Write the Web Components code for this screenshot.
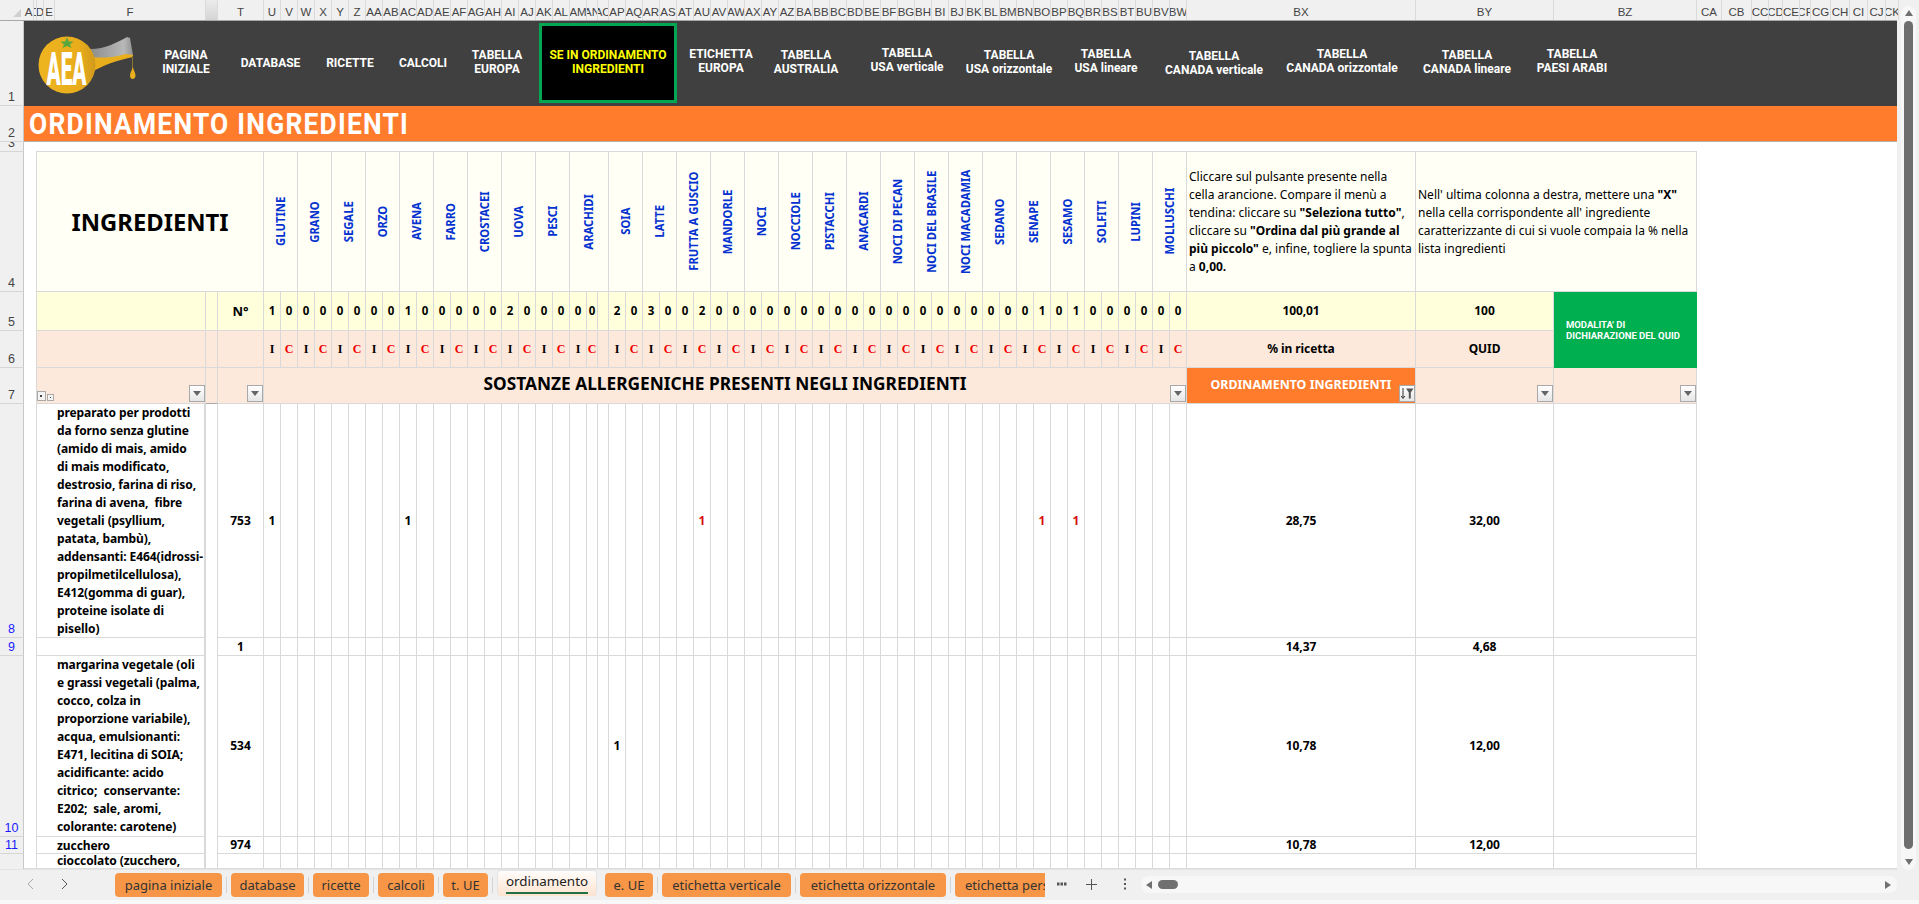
<!DOCTYPE html>
<html lang="it">
<head>
<meta charset="utf-8">
<title>ordinamento</title>
<style>
  html, body { margin: 0; height: 100%; overflow: hidden; background: #f0f0f0; }
</style>
</head>
<body>
<xl-app></xl-app>
<script>
const SUB_COLS = [];
for (let i = 0; i < 55; i++) SUB_COLS.push(i === 19 || i === 20 ? 11 : 17);
const TRACKS = [169, 12, 46, ...SUB_COLS, 229, 138, 143];

function colName(n) {
  let s = "";
  while (n > 0) {
    const m = (n - 1) % 26;
    s = String.fromCharCode(65 + m) + s;
    n = (n - m - 1) / 26;
  }
  return s;
}

class XlColBar extends HTMLElement {
  constructor() {
    super();
    this.attachShadow({ mode: "open" });
    const cols = [["A", 10], ["C", 3], ["D", 7], ["E", 11], ["F", 151], ["", 12, "gap"], ["T", 46]];
    SUB_COLS.forEach((w, i) => cols.push([colName(21 + i), w]));
    cols.push(["BX", 229], ["BY", 138], ["BZ", 143], ["CA", 25], ["CB", 30], ["CC", 17], ["CD", 14],
      ["CE", 17], ["CF", 11], ["CG", 20], ["CH", 19], ["CI", 18], ["CJ", 18], ["CK", 13]);
    this.shadowRoot.innerHTML = `
      <style>
        :host { display: flex; height: 20px; border-bottom: 1px solid #a8a8a8; background: #f0f0f0;
          font: 11.5px/20px "Liberation Sans", Arial, sans-serif; color: #444; }
        .corner { width: 24px; flex: none; position: relative; }
        .corner::after { content: ""; position: absolute; left: 13px; top: 9px; border-style: solid;
          border-width: 0 0 8px 8px; border-color: transparent transparent #d0d0d0 transparent; }
        .c { flex: none; box-sizing: border-box; text-align: center; overflow: hidden; white-space: nowrap;
          border-right: 1px solid #dadada; padding-top: 2px; display: flex; justify-content: center; }
        .gap { background: linear-gradient(#ececec, #d4d4d4); }
      </style>
      <div class="corner"></div>
      ${cols.map(([t, w, k]) => `<div class="c ${k || ""}" style="width:${w}px">${t}</div>`).join("")}`;
  }
}

class XlRowBar extends HTMLElement {
  constructor() {
    super();
    this.attachShadow({ mode: "open" });
    const rows = [[1, 85], [2, 36], [3, 10], [4, 140], [5, 39], [6, 37], [7, 36],
      [8, 234, 1], [9, 18, 1], [10, 181, 1], [11, 17, 1]];
    this.shadowRoot.innerHTML = `
      <style>
        :host { display: block; width: 24px; overflow: hidden; background: #f0f0f0;
          border-right: 0; font: 12.5px/16px "Liberation Sans", Arial, sans-serif; color: #444; box-sizing: border-box; }
        .r { box-sizing: border-box; border-bottom: 1px solid #d6d6d6; border-right: 1px solid #c8c8c8;
          display: flex; align-items: flex-end; justify-content: center; overflow: hidden; }
        .r span { display: block; }
        .f { color: #1a1aff; }
        .end { height: 20px; border-right: 1px solid #c8c8c8; }
      </style>
      ${rows.map(([n, h, f]) => `<div class="r ${f ? "f" : ""}" style="height:${h}px"><span>${n}</span></div>`).join("")}
      <div class="end"></div>`;
  }
}

class AeaLogo extends HTMLElement {
  constructor() {
    super();
    this.attachShadow({ mode: "open" });
    this.shadowRoot.innerHTML = `
      <style>:host { display: block; width: 132px; flex: none; } svg { display: block; margin: 9px 0 0 12px; }</style>
      <svg width="104" height="70" viewBox="36 30 104 70">
        <defs>
          <linearGradient id="gl" x1="0" x2="1" y1="0" y2="0"><stop offset="0" stop-color="#8a8a8a"/><stop offset=".8" stop-color="#b8b8b8"/><stop offset="1" stop-color="#909090"/></linearGradient>
          <linearGradient id="or" x1="0" x2="1" y1="0" y2="0"><stop offset="0" stop-color="#eeb41f"/><stop offset=".7" stop-color="#e9ad1c"/><stop offset="1" stop-color="#d19a1c"/></linearGradient>
        </defs>
        <path d="M88 49C103 50 116 43 127 37L130 38L133 55L92 60Z" fill="url(#gl)"/>
        <path d="M88 56C100 59 118 57 125 54L133 55L133 57C118 60 103 65 92 72Z" fill="#e9ae1c"/>
        <circle cx="67" cy="65" r="28.5" fill="url(#or)"/>
        <path d="M67 37.500L69 41.500L73.500 41.500L70 44.500L71.500 48L67 46L62.500 48L64 44.500L60.500 41.500L65 41.500Z" fill="#58a63c"/>
        <path d="M132.500 56V69" stroke="#8d7430" stroke-width="1"/>
        <path d="M132.800 67C134 71 135.500 73 135.500 75.500C135.500 77.500 134.200 79 132.800 79C131.200 79 130 77.500 130 75.500C130 73 131.600 71 132.800 67Z" fill="#e9ae1c"/>
        <text x="66.500" y="85" text-anchor="middle" font-family="Roboto, sans-serif" font-weight="900" font-size="47" fill="#fff" textLength="40" lengthAdjust="spacingAndGlyphs">AEA</text>
      </svg>`;
  }
}

class NavItem extends HTMLElement {
  constructor() {
    super();
    this.attachShadow({ mode: "open" });
    this.shadowRoot.innerHTML = `
      <style>
        :host { display: flex; flex: none; flex-direction: column; align-items: center; box-sizing: border-box;
          white-space: nowrap; text-align: center; color: #fff; font: 700 12px/14px Roboto, sans-serif; }
        :host([active]) { width: 138px; height: 80px; margin: 2px 0 0 16px; border: 3px solid #00a651; background: #000;
          color: #ff0; justify-content: center; padding-bottom: 3px; }
      </style>
      <div><slot></slot></div>`;
  }
}

class AeaNav extends HTMLElement {
  constructor() {
    super();
    this.attachShadow({ mode: "open" });
    const items = [
      [60, 27, "PAGINA<br>INIZIALE"], [109, 35, "DATABASE"], [50, 35, "RICETTE"], [96, 35, "CALCOLI"],
      [52, 27, "TABELLA<br>EUROPA"], [0, 0, "SE IN ORDINAMENTO<br>INGREDIENTI", 1], [88, 26, "ETICHETTA<br>EUROPA"],
      [82, 27, "TABELLA<br>AUSTRALIA"], [120, 25, "TABELLA<br>USA verticale"], [84, 27, "TABELLA<br>USA orizzontale"],
      [110, 26, "TABELLA<br>USA lineare"], [106, 28, "TABELLA<br>CANADA verticale"], [150, 26, "TABELLA<br>CANADA orizzontale"],
      [100, 27, "TABELLA<br>CANADA lineare"], [110, 26, "TABELLA<br>PAESI ARABI"],
    ];
    this.shadowRoot.innerHTML = `
      <style>:host { display: flex; height: 85px; background: #404040; flex: none; overflow: hidden; }</style>
      <aea-logo></aea-logo>
      ${items.map(([w, t, h, a]) => a ? `<nav-item active>${h}</nav-item>`
        : `<nav-item style="width:${w}px;padding-top:${t}px">${h}</nav-item>`).join("")}`;
  }
}

class SheetTitle extends HTMLElement {
  constructor() {
    super();
    this.attachShadow({ mode: "open" });
    this.shadowRoot.innerHTML = `
      <style>
        :host { display: block; flex: none; height: 36px; box-sizing: border-box; background: #ff7c2d;
          border-bottom: 1px solid #b9b0a8; color: #fff; font: 700 30px/35px Roboto, sans-serif; padding-left: 5px; white-space: nowrap; letter-spacing: 1.4px; }
        span { display: inline-block; transform: scaleX(.88); transform-origin: 0 50%; }
      </style>
      <span><slot></slot></span>`;
  }
}

class FilterButton extends HTMLElement {
  constructor() {
    super();
    this.attachShadow({ mode: "open" });
    this.shadowRoot.innerHTML = `
      <style>
        :host { position: absolute; right: 0; bottom: 1px; width: 16px; height: 17px; box-sizing: border-box;
          border: 1px solid #a9a9a9; background: linear-gradient(#fff, #e6e6e6); display: flex; align-items: center; justify-content: center; }
        i { border-style: solid; border-width: 5px 4px 0; border-color: #666 transparent transparent; }
        svg { display: block; }
      </style>
      ${this.hasAttribute("sorted")
        ? `<svg width="14" height="13" viewBox="0 0 14 13"><path d="M3 1V11M1.200 9L3 11.500L4.800 9" fill="none" stroke="#333" stroke-width="1"/><path d="M6 1.500H13.500L10.800 5.500V11.500H8.800V5.500Z" fill="#555"/></svg>`
        : `<i></i>`}`;
  }
}

class AllergenTable extends HTMLElement {
  constructor() {
    super();
    this.attachShadow({ mode: "open" });
    const names = ["GLUTINE", "GRANO", "SEGALE", "ORZO", "AVENA", "FARRO", "CROSTACEI", "UOVA", "PESCI", "ARACHIDI",
      "SOIA", "LATTE", "FRUTTA A GUSCIO", "MANDORLE", "NOCI", "NOCCIOLE", "PISTACCHI", "ANACARDI", "NOCI DI PECAN",
      "NOCI DEL BRASILE", "NOCI MACADAMIA", "SEDANO", "SENAPE", "SESAMO", "SOLFITI", "LUPINI", "MOLLUSCHI"];
    const counts = [1,0,0,0,0,0,0,0,1,0,0,0,0,0,2,0,0,0,0,0,"",2,0,3,0,0,2];
    while (counts.length < 55) counts.push(0);
    counts[46] = 1;
    counts[48] = 1;

    let h = `<div class="c ivory big" style="grid-column:span 3">INGREDIENTI</div>`;
    names.forEach((n) => {
      const span = n === "ARACHIDI" ? 3 : 2;
      h += `<div class="c ivory vert" style="grid-column:span ${span}"><span>${n}</span></div>`;
    });
    h += `<div class="c ivory note"><div>Cliccare sul pulsante presente nella<br>cella arancione. Compare il menù a<br>tendina: cliccare su <b>"Seleziona tutto"</b>,<br>cliccare su <b>"Ordina dal più grande al<br>più piccolo"</b> e, infine, togliere la spunta<br>a <b>0,00.</b></div></div>`;
    h += `<div class="c ivory note" style="grid-column:span 2"><div>Nell' ultima colonna a destra, mettere una <b>"X"</b><br>nella cella corrispondente all' ingrediente<br>caratterizzante di cui si vuole compaia la % nella<br>lista ingredienti</div></div>`;

    h += `<div class="c cream"></div><div class="c cream"></div><div class="c cream n14">N°</div>`;
    counts.forEach((v) => { h += `<div class="c cream num">${v}</div>`; });
    h += `<div class="c cream val">100,01</div><div class="c cream val">100</div>`;
    h += `<div class="c green" style="grid-row:span 2"><div>MODALITA' DI<br>DICHIARAZIONE DEL QUID</div></div>`;

    h += `<div class="c peach"></div><div class="c peach"></div><div class="c peach"></div>`;
    SUB_COLS.forEach((w, i) => {
      let t = i % 2 ? "C" : "I";
      if (i === 20) t = "";
      if (i > 20) t = (i - 21) % 2 ? "C" : "I";
      h += `<div class="c peach mark ${t === "C" ? "red" : ""}">${t}</div>`;
    });
    h += `<div class="c peach val">% in ricetta</div><div class="c peach val">QUID</div>`;

    h += `<div class="c peach"><span class="ol a"></span><span class="ol b"></span><filter-button></filter-button></div>`;
    h += `<div class="c peach lineb"></div>`;
    h += `<div class="c peach"><filter-button></filter-button></div>`;
    h += `<div class="c peach head" style="grid-column:span 55">SOSTANZE ALLERGENICHE PRESENTI NEGLI INGREDIENTI<filter-button></filter-button></div>`;
    h += `<div class="c orange">ORDINAMENTO INGREDIENTI<filter-button sorted></filter-button></div>`;
    h += `<div class="c peach"><filter-button></filter-button></div><div class="c peach"><filter-button></filter-button></div>`;

    const body = [
      ["preparato per prodotti\nda forno senza glutine\n(amido di mais, amido\ndi mais modificato,\ndestrosio, farina di riso,\nfarina di avena,  fibre\nvegetali (psyllium,\npatata, bambù),\naddensanti: E464(idrossi-\npropilmetilcellulosa),\nE412(gomma di guar),\nproteine isolate di\npisello)", "753", { 0: "k", 8: "k", 26: "r", 46: "r", 48: "r" }, "28,75", "32,00"],
      ["", "1", {}, "14,37", "4,68"],
      ["margarina vegetale (oli\ne grassi vegetali (palma,\ncocco, colza in\nproporzione variabile),\nacqua, emulsionanti:\nE471, lecitina di SOIA;\nacidificante: acido\ncitrico;  conservante:\nE202;  sale, aromi,\ncolorante: carotene)", "534", { 21: "k" }, "10,78", "12,00"],
      ["zucchero", "974", {}, "10,78", "12,00"],
      ["cioccolato (zucchero,", "", {}, "", ""],
    ];
    body.forEach(([name, code, marks, pct, quid], r) => {
      h += `<div class="c ing ${r === 4 ? "clip" : ""}">${name}</div><div class="c gapc"></div><div class="c val">${code}</div>`;
      SUB_COLS.forEach((w, i) => {
        const m = marks[i];
        h += `<div class="c num b ${m === "r" ? "redn" : ""}">${m ? 1 : ""}</div>`;
      });
      h += `<div class="c val">${pct}</div><div class="c val">${quid}</div><div class="c"></div>`;
    });

    this.shadowRoot.innerHTML = `
      <style>
        :host { display: grid; margin-left: 12px; width: max-content; height: 718px; overflow: hidden; box-sizing: border-box;
          grid-template-columns: ${TRACKS.map((w) => w + "px").join(" ")};
          grid-template-rows: 140px 39px 37px 36px 234px 18px 181px 17px 15px;
          border-left: 1px solid #d9d9d9; border-top: 1px solid #d9d9d9;
          font: 700 12px/18px "Noto Sans", sans-serif; letter-spacing: -.09px; color: #000; }
        .c { box-sizing: border-box; border-right: 1px solid #d9d9d9; border-bottom: 1px solid #d9d9d9;
          display: flex; align-items: center; justify-content: center; min-width: 0; overflow: hidden; position: relative; white-space: nowrap; }
        .ivory { background: #fffff5; }
        .cream { background: #ffffdc; }
        .peach { background: #fde9dc; }
        .big { font-size: 23.8px; letter-spacing: 0; }
        .vert span { writing-mode: vertical-rl; transform: rotate(180deg) scaleY(.9); color: #0432d0; font-size: 12.5px; line-height: 14px; letter-spacing: 0; }
        .note { justify-content: flex-start; font-weight: 400; font-size: 12px; padding-left: 2px; letter-spacing: 0; }
        .note b { font-weight: 700; }
        .n14 { font-size: 13px; }
        .num { font-size: 11.5px; }
        .num.b { font-size: 12px; }
        .mark { font: 700 12px "Liberation Serif", serif; }
        .red { color: #f00000; }
        .redn { color: #d81010; }
        .val { font-size: 12px; }
        .green { background: #00b050; color: #fff; font: 700 9.5px/10.5px Roboto, sans-serif; letter-spacing: 0; justify-content: flex-start; padding: 1px 0 0 12px; border: 0; }
        .head { font-size: 17.3px; letter-spacing: 0; padding-bottom: 3px; }
        .orange { background: #ff7c2d; color: #fff; font-size: 12.4px; letter-spacing: 0; padding-bottom: 2px; }
        .ing { display: block; white-space: pre; text-align: left; padding-left: 20px; border-right-width: 2px; }
        .clip { line-height: 14px; }
        .gapc { border-bottom: 0; }
        .lineb { border-bottom-color: #aaa; }
        .ol { position: absolute; bottom: 2px; background: #f4f4f4; border: 1px solid #a9a9a9; box-sizing: border-box; }
        .ol::after { content: ""; position: absolute; left: 2px; top: 3px; width: 2px; height: 2px; background: #444; }
        .ol.a { left: 0; width: 9px; height: 10px; }
        .ol.b { left: 10px; width: 7px; height: 7px; }
        .ol.b::after { left: 2px; top: 2px; width: 1px; height: 1px; }
      </style>
      ${h}`;
  }
}

class SheetTab extends HTMLElement {
  constructor() {
    super();
    this.attachShadow({ mode: "open" });
    this.shadowRoot.innerHTML = `
      <style>
        :host { display: flex; flex: none; align-items: center; justify-content: center; box-sizing: border-box; height: 24px; margin-right: 9px;
          border-radius: 4px; background: #f79646; color: #333; position: relative; white-space: nowrap; }
        :host::after { content: ""; position: absolute; right: -5px; top: 4px; height: 16px; width: 1px; background: #d4d4d4; }
        :host([active]) { height: 26px; margin-top: -3px; border: 1px solid #e4e4e4; border-bottom: 0; padding: 0 0 5px; font-size: 13.4px;
          background: linear-gradient(#fffdfb, #fde3cf); color: #222; margin-right: 8px; }
        :host([active])::before { content: ""; position: absolute; left: 8px; right: 8px; bottom: 2px; height: 2px; background: #1f7145; }
        :host([active])::after { display: none; }
      </style>
      <slot></slot>`;
  }
}

class TabBar extends HTMLElement {
  constructor() {
    super();
    this.attachShadow({ mode: "open" });
    this.shadowRoot.innerHTML = `
      <style>
        :host { display: flex; height: 31px; background: #f0f0f0; font: 13px "Noto Sans", sans-serif; box-sizing: border-box; border-top: 1px solid #e4e4e4; }
        .nav { width: 115px; flex: none; display: flex; align-items: center; box-sizing: border-box; padding: 0 0 2px 27px; gap: 27px; }
        .tabs { width: 930px; flex: none; display: flex; overflow: hidden; padding-top: 3px; box-sizing: border-box; }
        .tools { width: 96px; flex: none; display: flex; align-items: center; box-sizing: border-box; padding: 0 0 2px 11px; }
        .tools svg { display: block; }
        .track { flex: 1; height: 17px; margin-top: 6px; border-radius: 8px; background: #f7f7f7; display: flex; align-items: center; padding: 0 6px 0 5px; }
        .thumb { width: 20px; height: 9px; border-radius: 5px; background: #707070; margin: 0 auto 0 6px; }
        .l { width: 0; border-style: solid; border-width: 4.5px 6px 4.5px 0; border-color: transparent #707070 transparent transparent; }
        .r { width: 0; border-style: solid; border-width: 4.5px 0 4.5px 6px; border-color: transparent transparent transparent #707070; }
      </style>
      <div class="nav">
        <svg width="7" height="12" viewBox="0 0 7 12"><path d="M6 1L1 6L6 11" fill="none" stroke="#a8a8a8"/></svg>
        <svg width="7" height="12" viewBox="0 0 7 12"><path d="M1 1L6 6L1 11" fill="none" stroke="#555"/></svg>
      </div>
      <div class="tabs"><slot></slot></div>
      <div class="tools">
        <svg width="12" height="4" viewBox="0 0 12 4" style="margin-right:17px"><path d="M1 0.5h2.500v3h-2.500zM4.500 0.5h2.500v3h-2.500zM8 0.5h2.500v3h-2.500z" fill="#555"/></svg>
        <svg width="13" height="13" viewBox="0 0 13 13" style="margin-right:25px"><path d="M6.500 1V12M1 6.500H12" stroke="#555"/></svg>
        <svg width="4" height="14" viewBox="0 0 4 14"><path d="M1 1.500h2v2h-2zM1 6h2v2h-2zM1 10.500h2v2h-2z" fill="#555"/></svg>
      </div>
      <div class="track"><i class="l"></i><div class="thumb"></div><i class="r"></i></div>`;
  }
}

class VScroll extends HTMLElement {
  constructor() {
    super();
    this.attachShadow({ mode: "open" });
    this.shadowRoot.innerHTML = `
      <style>
        :host { display: flex; flex-direction: column; align-items: center; box-sizing: border-box; width: 15px; margin: 6px 0 0 4px;
          height: 864px; background: #f7f7f7; border-radius: 8px; padding: 4px 0; }
        .u { border-style: solid; border-width: 0 4.5px 6px; border-color: transparent transparent #707070; margin-bottom: 5px; }
        .t { width: 9px; height: 828px; border-radius: 5px; background: #6e6e6e; flex: none; }
        .d { border-style: solid; border-width: 6px 4.5px 0; border-color: #707070 transparent transparent; margin-top: 10px; }
      </style>
      <i class="u"></i><div class="t"></div><i class="d"></i>`;
  }
}

class XlApp extends HTMLElement {
  constructor() {
    super();
    this.attachShadow({ mode: "open" });
    this.shadowRoot.innerHTML = `
      <style>
        :host { display: grid; width: 1919px; height: 904px; overflow: hidden; background: #f0f0f0;
          grid-template-columns: 24px 1873px 22px; grid-template-rows: 21px 848px 31px 4px; }
        xl-col-bar { grid-column: 1 / 3; }
        v-scroll { grid-column: 3; grid-row: 1 / 4; }
        .sheet { background: #fff; display: flex; flex-direction: column; overflow: hidden; border-bottom: 1px solid #dcdcdc; box-sizing: border-box; }
        .row3 { height: 9px; flex: none; }
        tab-bar { grid-column: 1 / 3; grid-row: 3; }
        .foot { grid-column: 1 / 4; grid-row: 4; background: #f8f8f8; }
      </style>
      <xl-col-bar></xl-col-bar>
      <v-scroll></v-scroll>
      <xl-row-bar></xl-row-bar>
      <div class="sheet">
        <aea-nav></aea-nav>
        <sheet-title>ORDINAMENTO INGREDIENTI</sheet-title>
        <div class="row3"></div>
        <allergen-table></allergen-table>
      </div>
      <tab-bar>
        <sheet-tab style="width:107px">pagina iniziale</sheet-tab>
        <sheet-tab style="width:73px">database</sheet-tab>
        <sheet-tab style="width:56px">ricette</sheet-tab>
        <sheet-tab style="width:56px">calcoli</sheet-tab>
        <sheet-tab style="width:45px">t. UE</sheet-tab>
        <sheet-tab active style="width:100px">ordinamento</sheet-tab>
        <sheet-tab style="width:48px">e. UE</sheet-tab>
        <sheet-tab style="width:129px">etichetta verticale</sheet-tab>
        <sheet-tab style="width:146px">etichetta orizzontale</sheet-tab>
        <sheet-tab style="width:170px;justify-content:flex-start;padding-left:10px">etichetta personalizzata</sheet-tab>
      </tab-bar>
      <div class="foot"></div>`;
  }
}

customElements.define("xl-col-bar", XlColBar);
customElements.define("xl-row-bar", XlRowBar);
customElements.define("aea-logo", AeaLogo);
customElements.define("nav-item", NavItem);
customElements.define("aea-nav", AeaNav);
customElements.define("sheet-title", SheetTitle);
customElements.define("filter-button", FilterButton);
customElements.define("allergen-table", AllergenTable);
customElements.define("sheet-tab", SheetTab);
customElements.define("tab-bar", TabBar);
customElements.define("v-scroll", VScroll);
customElements.define("xl-app", XlApp);
</script>
</body>
</html>
